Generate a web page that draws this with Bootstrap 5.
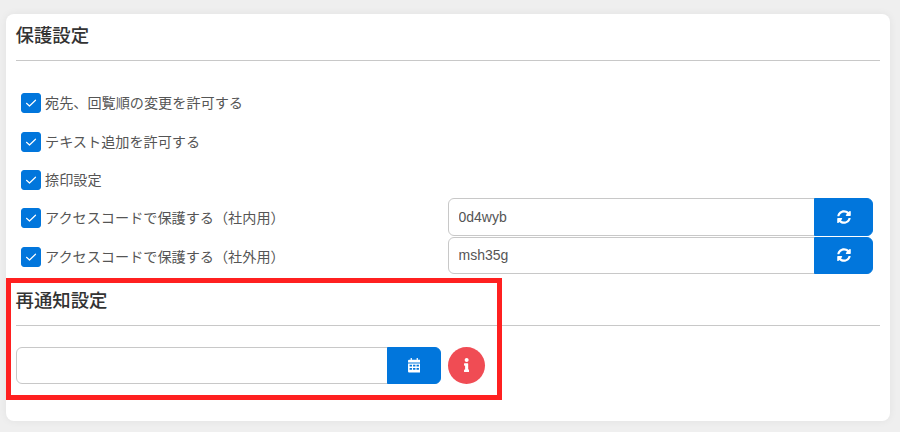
<!DOCTYPE html>
<html lang="ja">
<head>
<meta charset="utf-8">
<title>保護設定</title>
<link href="https://cdn.jsdelivr.net/npm/bootstrap@5.3.0/dist/css/bootstrap.min.css" rel="stylesheet">
<style>
html, body { height: 100%; overflow: hidden; }
body { background: #efefef; font-family: "Liberation Sans", "Noto Sans CJK JP", sans-serif; font-size: 14.15px; color: #555; }
.page-wrap { padding: 14px 10px 0 6px; position: relative; }
.panel { background: #fff; border: 0; border-radius: 8px; height: 407px; padding: 0 10px; box-shadow: 0 0 8px rgba(0,0,0,.06); }
.sec-title { font-size: 18.4px; font-weight: 500; color: #333; line-height: 26px; margin: 0 0 0 -.5px; }
.sec-one { padding-top: 9px; padding-bottom: 11px; border-bottom: 1px solid #c8c8c8; }
.sec-two { padding-top: 12px; padding-bottom: 11px; border-bottom: 1px solid #c8c8c8; }
.check-list { padding: 23px 7px 0 5px; }
.check-row { height: 38.4px; }
.check-row .form-check-input { width: 20px; height: 20px; margin: 0 4px 0 0; border-radius: 3px; background-color: #0176dc; border-color: #0176dc; flex: none;
  background-image: url("data:image/svg+xml,%3csvg xmlns='http://www.w3.org/2000/svg' viewBox='0 0 20 20'%3e%3cpath fill='none' stroke='%23fff' stroke-width='1.2' stroke-linecap='round' stroke-linejoin='round' d='M5.500 10.300l3 2.700 6-5.800'/%3e%3c/svg%3e"); background-size: 20px; }
.check-row label { color: #555; line-height: 20px; }
.code-group { width: 425px; height: 37.5px; margin-bottom: 3px; }
.code-group .form-control { height: 37.5px; }
.form-control { border-color: #c8c8c8; color: #555; font-size: 14px; padding: 0 9.5px; border-radius: 6px; }
.btn-azure { background: #0176dc; border-color: #0176dc; color: #fff; padding: 0; display: flex; align-items: center; justify-content: center; border-radius: 6px; }
.btn-azure svg { fill: #fff; display: block; }
.btn-sync { width: 59px; }
.notify-row { padding-top: 21px; }
.date-group { width: 425px; height: 37px; }
.date-group .form-control { height: 37px; }
.btn-date { width: 54px; }
.info-dot { width: 37px; height: 37px; border-radius: 50%; background: #f04c54; border: 0; padding: 0; margin-left: 7px; display: flex; align-items: center; justify-content: center; }
.info-dot svg { fill: #fff; display: block; }
.red-frame { position: absolute; left: 6px; top: 278px; width: 496px; height: 122px; border: 5px solid #ff2020; pointer-events: none; }
</style>
</head>
<body>
<div class="page-wrap">
  <div class="panel card">
    <div class="sec-one"><h2 class="sec-title">保護設定</h2></div>
    <div class="check-list">
      <div class="check-row d-flex align-items-center">
        <input class="form-check-input" type="checkbox" id="c1" checked>
        <label for="c1">宛先、回覧順の変更を許可する</label>
      </div>
      <div class="check-row d-flex align-items-center">
        <input class="form-check-input" type="checkbox" id="c2" checked>
        <label for="c2">テキスト追加を許可する</label>
      </div>
      <div class="check-row d-flex align-items-center">
        <input class="form-check-input" type="checkbox" id="c3" checked>
        <label for="c3">捺印設定</label>
      </div>
      <div class="check-row d-flex align-items-center">
        <input class="form-check-input" type="checkbox" id="c4" checked>
        <label for="c4">アクセスコードで保護する（社内用）</label>
        <div class="input-group code-group ms-auto">
          <input class="form-control" type="text" value="0d4wyb">
          <button class="btn btn-azure btn-sync" type="button" aria-label="更新">
            <svg width="14" height="14" viewBox="0 0 512 512"><path d="M370.72 133.28C339.458 104.008 298.888 87.962 255.848 88c-77.458.068-144.328 53.178-162.791 126.85-1.344 5.363-6.122 9.15-11.651 9.15H24.103c-7.498 0-13.194-6.807-11.807-14.176C33.933 94.924 134.813 8 256 8c66.448 0 126.791 26.136 171.315 68.685L463.03 40.97C478.149 25.851 504 36.559 504 57.941V192c0 13.255-10.745 24-24 24H345.941c-21.382 0-32.09-25.851-16.971-40.971l41.75-41.749zM32 296h134.059c21.382 0 32.09 25.851 16.971 40.971l-41.75 41.75c31.262 29.273 71.835 45.319 114.876 45.28 77.418-.07 144.315-53.144 162.787-126.849 1.344-5.363 6.122-9.15 11.651-9.15h57.304c7.498 0 13.194 6.807 11.807 14.176C478.067 417.076 377.187 504 256 504c-66.448 0-126.791-26.136-171.315-68.685L48.97 471.03C33.851 486.149 8 475.441 8 454.059V320c0-13.255 10.745-24 24-24z"/></svg>
          </button>
        </div>
      </div>
      <div class="check-row d-flex align-items-center">
        <input class="form-check-input" type="checkbox" id="c5" checked>
        <label for="c5">アクセスコードで保護する（社外用）</label>
        <div class="input-group code-group ms-auto">
          <input class="form-control" type="text" value="msh35g">
          <button class="btn btn-azure btn-sync" type="button" aria-label="更新">
            <svg width="14" height="14" viewBox="0 0 512 512"><path d="M370.72 133.28C339.458 104.008 298.888 87.962 255.848 88c-77.458.068-144.328 53.178-162.791 126.85-1.344 5.363-6.122 9.15-11.651 9.15H24.103c-7.498 0-13.194-6.807-11.807-14.176C33.933 94.924 134.813 8 256 8c66.448 0 126.791 26.136 171.315 68.685L463.03 40.97C478.149 25.851 504 36.559 504 57.941V192c0 13.255-10.745 24-24 24H345.941c-21.382 0-32.09-25.851-16.971-40.971l41.75-41.749zM32 296h134.059c21.382 0 32.09 25.851 16.971 40.971l-41.75 41.75c31.262 29.273 71.835 45.319 114.876 45.28 77.418-.07 144.315-53.144 162.787-126.849 1.344-5.363 6.122-9.15 11.651-9.15h57.304c7.498 0 13.194 6.807 11.807 14.176C478.067 417.076 377.187 504 256 504c-66.448 0-126.791-26.136-171.315-68.685L48.97 471.03C33.851 486.149 8 475.441 8 454.059V320c0-13.255 10.745-24 24-24z"/></svg>
          </button>
        </div>
      </div>
    </div>
    <div class="sec-two"><h2 class="sec-title">再通知設定</h2></div>
    <div class="notify-row d-flex align-items-center">
      <div class="input-group date-group">
        <input class="form-control" type="text">
        <button class="btn btn-azure btn-date" type="button" aria-label="カレンダー">
          <svg width="12.500" height="14.500" viewBox="0 0 12 14"><path fill-rule="evenodd" d="M2.500 0h1.200v1.600h4.600V0h1.200v1.600H11a1 1 0 0 1 1 1V4.400H0V2.600a1 1 0 0 1 1-1h1.500zM0 5.200h12V13a1 1 0 0 1-1 1H1a1 1 0 0 1-1-1zM1.500 6.600v1.700h2.300V6.600zm3.350 0v1.700h2.300V6.600zm3.350 0v1.700h2.300V6.600zM1.500 9.700v1.700h2.300V9.700zm3.350 0v1.700h2.300V9.700zm3.350 0v1.700h2.300V9.700z"/></svg>
        </button>
      </div>
      <button class="info-dot" type="button" aria-label="情報">
        <svg width="5.300" height="14" viewBox="0 0 192 512"><path d="M20 424.229h20V279.771H20c-11.046 0-20-8.954-20-20V212c0-11.046 8.954-20 20-20h112c11.046 0 20 8.954 20 20v212.229h20c11.046 0 20 8.954 20 20V492c0 11.046-8.954 20-20 20H20c-11.046 0-20-8.954-20-20v-47.771c0-11.046 8.954-20 20-20zM96 0C56.235 0 24 32.235 24 72s32.235 72 72 72 72-32.235 72-72S135.764 0 96 0z"/></svg>
      </button>
    </div>
  </div>
  <div class="red-frame"></div>
</div>
<script src="https://cdn.jsdelivr.net/npm/bootstrap@5.3.0/dist/js/bootstrap.bundle.min.js"></script>
</body>
</html>
